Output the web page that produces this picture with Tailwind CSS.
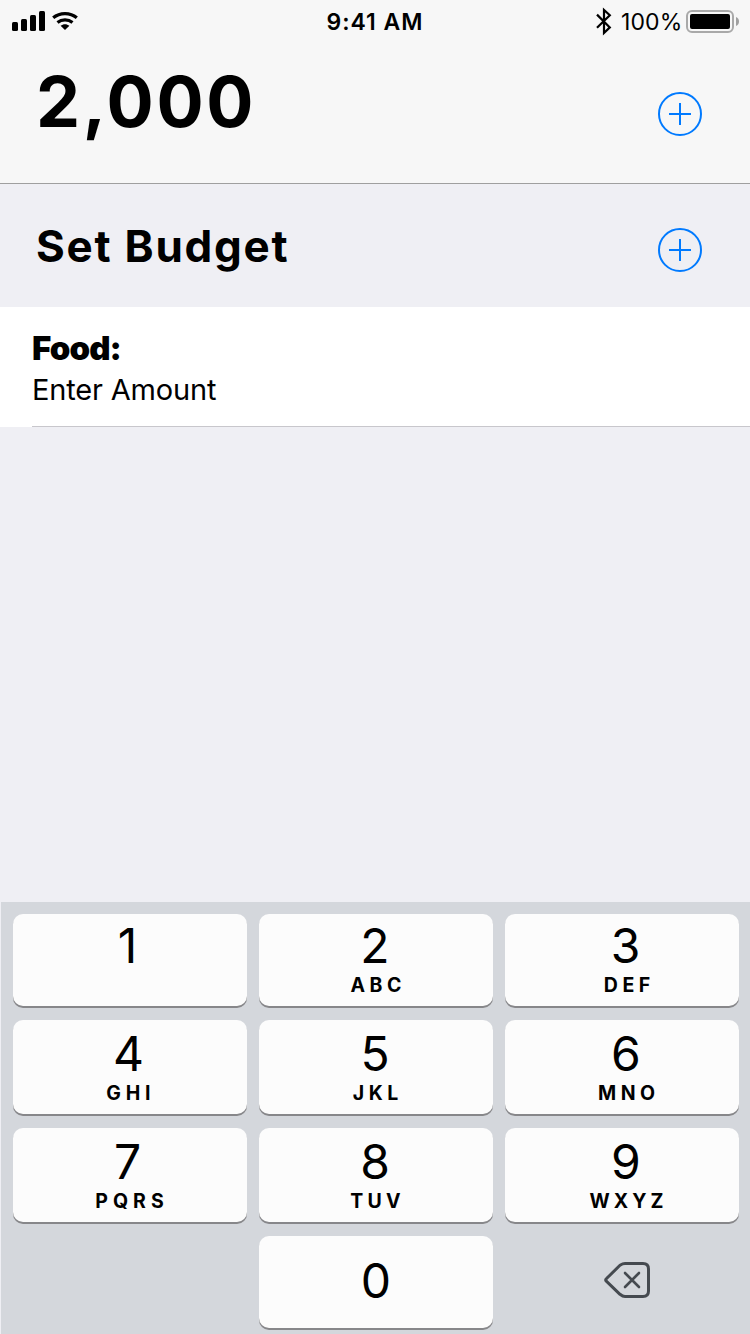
<!DOCTYPE html>
<html lang="en">
<head>
<meta charset="utf-8">
<title>Budget</title>
<script src="https://cdn.jsdelivr.net/npm/@tailwindcss/browser@4"></script>
</head>
<body class="font-['Inter','Liberation_Sans',sans-serif] text-black">
<div class="flex h-[1334px] w-[750px] flex-col overflow-hidden bg-[#efeff4]">

  <header class="h-[184px] shrink-0 border-b border-[#9f9f9f] bg-[#f7f7f7]">
    <!-- Status bar -->
    <div class="grid h-[42px] grid-cols-3 items-start">
      <svg class="h-[42px] w-[90px]" viewBox="0 0 90 42">
        <rect x="12" y="22" width="6" height="9" rx="1.5"/>
        <rect x="21" y="19" width="6" height="12" rx="1.5"/>
        <rect x="30" y="15" width="6" height="16" rx="1.5"/>
        <rect x="39" y="11" width="6" height="20" rx="1.5"/>
        <path d="M53.2 17.8C59.8 12.1 70.2 12.1 76.8 17.8" fill="none" stroke="#000" stroke-width="3.2"/>
        <path d="M57.5 22.4C61.8 18.9 68.2 18.9 72.5 22.4" fill="none" stroke="#000" stroke-width="3.2"/>
        <path d="M60.6 25.8C63.2 23.6 66.8 23.6 69.4 25.8L65 30Z"/>
      </svg>
      <div class="mt-2 text-center text-[23px] leading-7 font-semibold tracking-[1px]">9:41 AM</div>
      <div class="flex justify-end pr-[10px]">
        <svg class="h-[42px] w-[20px]" viewBox="594 0 20 42">
          <path d="M597 14.6L609.8 27.4L604 33V10L609.8 15.2L597 27.8" fill="none" stroke="#000" stroke-width="2.2"/>
        </svg>
        <div class="mt-2 ml-[7px] w-[61px] text-[23px] leading-7 tracking-[0.1px]">100%</div>
        <svg class="ml-[3px] h-[42px] w-[55px]" viewBox="685 0 55 42">
          <rect x="687" y="11" width="46" height="21" rx="5" fill="none" stroke="#a9a9a9" stroke-width="2"/>
          <rect x="690" y="14" width="40" height="15" rx="2"/>
          <path d="M736 17C740 18.5 740 24.5 736 26Z" fill="#a0a0a0"/>
        </svg>
      </div>
    </div>
    <div class="flex items-start justify-between pr-12 pl-9">
      <h1 class="mt-[25px] text-[70px] leading-[70px] font-bold tracking-[2.6px]">2,000</h1>
      <svg class="mt-[50px] size-11" viewBox="0 0 44 44" fill="none" stroke="#007aff" stroke-width="2">
        <circle cx="22" cy="22" r="21"/>
        <path d="M11 22H33M22 11V33"/>
      </svg>
    </div>
  </header>

  <section class="flex h-[123px] shrink-0 items-start justify-between pr-12 pl-9">
    <h2 class="mt-10 text-[44px] leading-[44px] font-bold tracking-[1.75px]">Set Budget</h2>
    <svg class="mt-11 size-11" viewBox="0 0 44 44" fill="none" stroke="#007aff" stroke-width="2">
      <circle cx="22" cy="22" r="21"/>
      <path d="M11 22H33M22 11V33"/>
    </svg>
  </section>

  <section class="h-[120px] shrink-0 bg-white pl-8">
    <div class="h-full border-b border-[#c8c7cc] pt-[21px]">
      <div class="text-[33px] leading-10 font-black tracking-[-0.9px]">Food:</div>
      <div class="mt-1 text-[29px] leading-9 tracking-[-0.17px]">Enter Amount</div>
    </div>
  </section>

  <!-- Numeric keypad -->
  <section class="mt-auto ml-px flex h-[432px] shrink-0 flex-col gap-[14px] bg-[#d4d7dc] pt-3 pr-[11px] pl-3 text-center text-[48px] leading-[49px]">
    <div class="grid h-[92px] shrink-0 grid-cols-3 gap-3">
      <div class="rounded-[10px] bg-[#fcfcfc] pt-[7px] pr-[5px] shadow-[0_2px_0_#87878a]">1</div>
      <div class="rounded-[10px] bg-[#fcfcfc] pt-[7px] pr-0.5 shadow-[0_2px_0_#87878a]">2<div class="mt-[5px] -mr-[6.5px] text-[19.5px] leading-5 font-bold tracking-[4.5px]">ABC</div></div>
      <div class="rounded-[10px] bg-[#fcfcfc] pt-[7px] pl-[7px] shadow-[0_2px_0_#87878a]">3<div class="mt-[5px] -mr-[4.5px] pl-[3px] text-[19.5px] leading-5 font-bold tracking-[4.5px]">DEF</div></div>
    </div>
    <div class="grid h-[94px] shrink-0 grid-cols-3 gap-3">
      <div class="rounded-[10px] bg-[#fcfcfc] pt-[9px] pr-[3px] shadow-[0_2px_0_#87878a]">4<div class="mt-[5px] -mr-[4.5px] text-[19.5px] leading-5 font-bold tracking-[4.7px]">GHI</div></div>
      <div class="rounded-[10px] bg-[#fcfcfc] pt-[9px] pr-0.5 shadow-[0_2px_0_#87878a]">5<div class="mt-[5px] -mr-[5.5px] text-[19.5px] leading-5 font-bold tracking-[4.5px]">JKL</div></div>
      <div class="rounded-[10px] bg-[#fcfcfc] pt-[9px] pl-2 shadow-[0_2px_0_#87878a]">6<div class="mt-[5px] -mr-[5.5px] text-[19.5px] leading-5 font-bold tracking-[4.5px]">MNO</div></div>
    </div>
    <div class="grid h-[94px] shrink-0 grid-cols-3 gap-3">
      <div class="rounded-[10px] bg-[#fcfcfc] pt-[9px] pr-[5px] shadow-[0_2px_0_#87878a]">7<div class="mt-[5px] -mr-[9px] text-[19.5px] leading-5 font-bold tracking-[5px]">PQRS</div></div>
      <div class="rounded-[10px] bg-[#fcfcfc] pt-[9px] pr-0.5 shadow-[0_2px_0_#87878a]">8<div class="mt-[5px] -mr-[5px] text-[19.5px] leading-5 font-bold tracking-[4.2px]">TUV</div></div>
      <div class="rounded-[10px] bg-[#fcfcfc] pt-[9px] pl-2 shadow-[0_2px_0_#87878a]">9<div class="mt-[5px] -mr-[5px] text-[19.5px] leading-5 font-bold tracking-[4px]">WXYZ</div></div>
    </div>
    <div class="grid h-[92px] shrink-0 grid-cols-3 gap-3">
      <div></div>
      <div class="rounded-[10px] bg-[#fcfcfc] pt-5 shadow-[0_2px_0_#87878a]">0</div>
      <div class="flex justify-center pt-[25px] pl-[9px]">
        <svg class="h-[38px] w-12" viewBox="0 0 48 38" fill="none" stroke="#454a50" stroke-linecap="round" stroke-linejoin="round">
          <path d="M17 4.2Q19.8 2.5 22 2.5H40Q45.5 2.5 45.5 8V30Q45.5 35.5 40 35.5H22Q19.8 35.5 17 33.3L3.3 20.2Q2 19 3.3 17.8Z" stroke-width="3"/>
          <path d="M22 12L36 26M36 12L22 26" stroke-width="2.6"/>
        </svg>
      </div>
    </div>
  </section>
</div>
</body>
</html>
